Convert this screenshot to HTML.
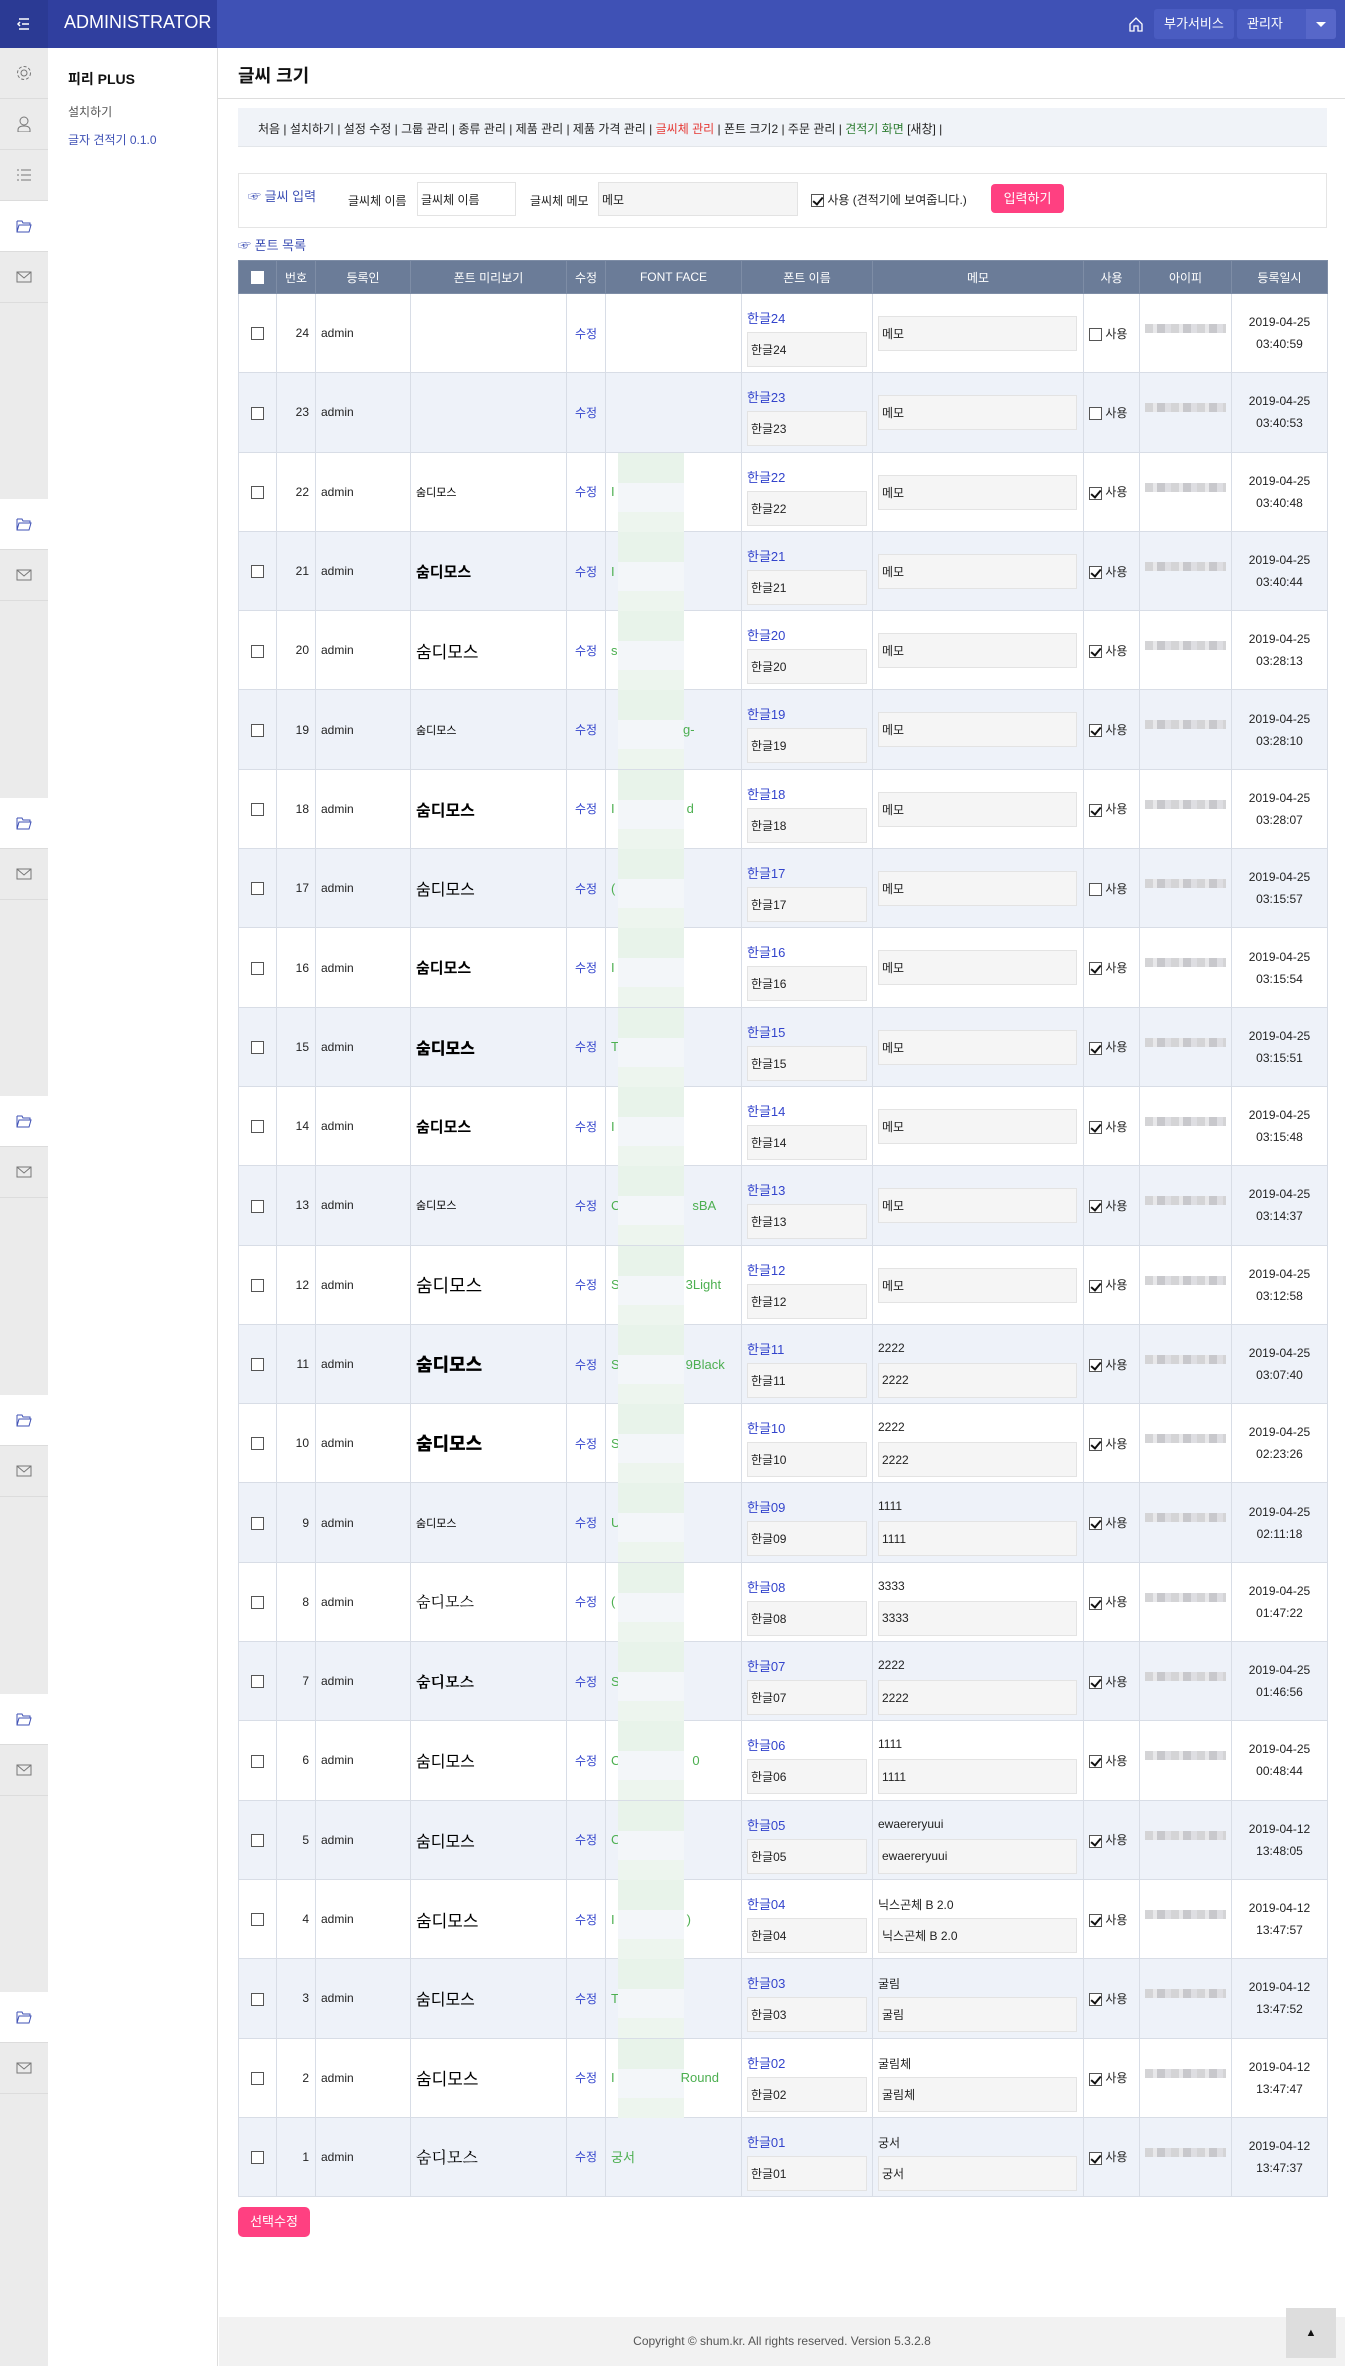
<!DOCTYPE html>
<html><head><meta charset="utf-8">
<style>
*{box-sizing:border-box;margin:0;padding:0}
body{width:1345px;height:2366px;position:relative;background:#fff;font-family:"Liberation Sans","Noto Sans CJK KR",sans-serif;font-size:12px;color:#222;overflow:hidden}
.abs{position:absolute}
#top{left:0;top:0;width:1345px;height:48px;background:#3f51b5}
#topl{left:0;top:0;width:217px;height:48px;background:#303f9f}
#tog{left:0;top:0;width:48px;height:48px;background:#2b3a94}
#iconbar{left:0;top:48px;width:48px;height:2318px;background:#ebebeb}
.ic{position:absolute;left:0;width:48px;height:51px;border-bottom:1px solid #dcdcdc;background:#ebebeb}
.ic.w{background:#fff}
.ic svg{position:absolute;left:16px;top:17px}
#side{left:48px;top:48px;width:170px;height:2318px;background:#fff;border-right:1px solid #ddd}
.topbtn{position:absolute;top:9px;height:30px;line-height:30px;color:#fff;font-size:13px;background:#4a5cc1;border-radius:3px;padding:0 10px}
table{border-collapse:collapse;table-layout:fixed;position:absolute;left:238px;top:260px;width:1089px}
th{background:#6b7c98;color:#fff;font-weight:normal;height:33px;border:1px solid #7e8da6;font-size:12px}
td{border:1px solid #d8dde6;height:79.3px;vertical-align:middle;position:relative}
tr:nth-child(odd) td{background:#eef2f9}
.cb{display:inline-block;width:13px;height:13px;border:1px solid #555;background:#fff;vertical-align:middle}
.ck{position:relative}
.ck:after{content:"";position:absolute;left:3px;top:0px;width:4px;height:8px;border:solid #111;border-width:0 2px 2px 0;transform:rotate(40deg)}
.num{text-align:right;padding-right:6px}
.adm{padding-left:5px}
.mod{text-align:center;color:#3344cc}
.fn a{position:absolute;left:5px;top:14px;color:#3344cc;font-size:13px}
.inp{position:absolute;background:#f5f5f5;border:1px solid #e3e3e3;padding-left:3px;font-size:12px;display:flex;align-items:center}
.fn .inp{left:5px;top:38px;width:120px;height:35px}
.mm .inp1{left:5px;top:22px;width:199px;height:35px}
.mm .inp2{left:5px;top:38px;width:199px;height:35px}
.mm .t{position:absolute;left:5px;top:16px}
.use{padding-left:5px;white-space:nowrap}
.ip div{position:absolute;left:5px;top:30px;width:81px;height:9px;background:repeating-linear-gradient(90deg,#d4d4d6 0 8px,#e8e8ea 8px 12px,#c8c8cc 12px 20px,#dedee2 20px 26px)}
.dt{text-align:center;line-height:22px}
.pv{padding-left:5px;color:#000}
.ff{padding-left:5px;color:#4caf50;font-size:13px}
.blk{position:absolute;left:12px;top:0;width:66px;height:79px;background:linear-gradient(180deg,#e8f3ea 0 38%,#f3f6f9 38% 75%,#edf5ee 75%)}
</style></head><body>
<div id="top" class="abs"></div>
<div id="topl" class="abs"></div>
<div id="tog" class="abs"><svg width="48" height="48"><g stroke="#fff" stroke-width="1.5" fill="none"><path d="M19 19h10M22 24h7M19 29h10M20 22l-2 2 2 2"/></g></svg></div>
<div class="abs" style="left:64px;top:12px;color:#fff;font-size:18px">ADMINISTRATOR</div>
<svg class="abs" style="left:1128px;top:15px" width="16" height="18"><path d="M2 9L8 3l6 6v7h-4v-5H6v5H2z" fill="none" stroke="#fff" stroke-width="1.3"/></svg>
<div class="topbtn" style="left:1154px;width:80px">부가서비스</div>
<div class="topbtn" style="left:1237px;width:99px;padding:0">
<span style="padding-left:10px">관리자</span><span style="position:absolute;right:0;top:0;width:30px;height:30px;background:#5767c9;border-radius:0 3px 3px 0"></span><span style="position:absolute;right:10px;top:13px;border:5px solid transparent;border-top:5px solid #fff;border-bottom:0"></span></div>

<div id="iconbar" class="abs">
<div class="ic" style="top:0"><svg width="16" height="16"><circle cx="8" cy="8" r="3" fill="none" stroke="#777"/><circle cx="8" cy="8" r="6.5" fill="none" stroke="#777" stroke-dasharray="3 2"/></svg></div>
<div class="ic" style="top:51px"><svg width="16" height="16"><circle cx="8" cy="5" r="4" fill="none" stroke="#777"/><path d="M2 16v-2c0-3 3-4 6-4s6 1 6 4v2z" fill="none" stroke="#777"/></svg></div>
<div class="ic" style="top:102px"><svg width="16" height="16" stroke="#777"><path d="M5 3h10M5 8h10M5 13h10M1 3h2M1 8h2M1 13h2"/></svg></div>
<div class="ic w" style="top:153px"><svg width="16" height="16" fill="none" stroke="#3f51b5"><path d="M1 3h5l1 2h7v2M1 3v11h12l2-7H3L1 14"/></svg></div>
<div class="ic" style="top:204px"><svg width="16" height="16" fill="none" stroke="#777"><path d="M1 3h14v10H1zM1 3l7 6 7-6"/></svg></div>
<div class="ic w" style="top:451px"><svg width="16" height="16" fill="none" stroke="#3f51b5"><path d="M1 3h5l1 2h7v2M1 3v11h12l2-7H3L1 14"/></svg></div>
<div class="ic" style="top:502px"><svg width="16" height="16" fill="none" stroke="#777"><path d="M1 3h14v10H1zM1 3l7 6 7-6"/></svg></div>
<div class="ic w" style="top:750px"><svg width="16" height="16" fill="none" stroke="#3f51b5"><path d="M1 3h5l1 2h7v2M1 3v11h12l2-7H3L1 14"/></svg></div>
<div class="ic" style="top:801px"><svg width="16" height="16" fill="none" stroke="#777"><path d="M1 3h14v10H1zM1 3l7 6 7-6"/></svg></div>
<div class="ic w" style="top:1048px"><svg width="16" height="16" fill="none" stroke="#3f51b5"><path d="M1 3h5l1 2h7v2M1 3v11h12l2-7H3L1 14"/></svg></div>
<div class="ic" style="top:1099px"><svg width="16" height="16" fill="none" stroke="#777"><path d="M1 3h14v10H1zM1 3l7 6 7-6"/></svg></div>
<div class="ic w" style="top:1347px"><svg width="16" height="16" fill="none" stroke="#3f51b5"><path d="M1 3h5l1 2h7v2M1 3v11h12l2-7H3L1 14"/></svg></div>
<div class="ic" style="top:1398px"><svg width="16" height="16" fill="none" stroke="#777"><path d="M1 3h14v10H1zM1 3l7 6 7-6"/></svg></div>
<div class="ic w" style="top:1646px"><svg width="16" height="16" fill="none" stroke="#3f51b5"><path d="M1 3h5l1 2h7v2M1 3v11h12l2-7H3L1 14"/></svg></div>
<div class="ic" style="top:1697px"><svg width="16" height="16" fill="none" stroke="#777"><path d="M1 3h14v10H1zM1 3l7 6 7-6"/></svg></div>
<div class="ic w" style="top:1944px"><svg width="16" height="16" fill="none" stroke="#3f51b5"><path d="M1 3h5l1 2h7v2M1 3v11h12l2-7H3L1 14"/></svg></div>
<div class="ic" style="top:1995px"><svg width="16" height="16" fill="none" stroke="#777"><path d="M1 3h14v10H1zM1 3l7 6 7-6"/></svg></div>
</div>

<div id="side" class="abs">
<div class="abs" style="left:20px;top:21px;font-size:14px;font-weight:bold;color:#111">피리 PLUS</div>
<div class="abs" style="left:20px;top:55px;color:#555">설치하기</div>
<div class="abs" style="left:20px;top:83px;color:#3f51b5">글자 견적기 0.1.0</div>
</div>

<div class="abs" style="left:238px;top:62px;font-size:18px;font-weight:bold;color:#111">글씨 크기</div>
<div class="abs" style="left:218px;top:98px;width:1127px;height:1px;background:#ddd"></div>
<div class="abs" style="left:238px;top:108px;width:1089px;height:39px;background:#f0f3f8;border-bottom:1px solid #e3e6ea;padding:12px 0 0 20px;font-size:12px;color:#222">처음 | 설치하기 | 설정 수정 | 그룹 관리 | 종류 관리 | 제품 관리 | 제품 가격 관리 | <span style="color:#e53935">글씨체 관리</span> | 폰트 크기2 | 주문 관리 | <span style="color:#2e7d32">견적기 화면</span> [새창] |</div>

<div class="abs" style="left:238px;top:173px;width:1089px;height:55px;border:1px solid #e5e5e5"></div>
<div class="abs" style="left:248px;top:186px;color:#3f51b5;font-size:13px">☞ 글씨 입력</div>
<div class="abs" style="left:348px;top:192px">글씨체 이름</div>
<div class="abs inp" style="left:417px;top:182px;width:99px;height:34px;background:#fff">글씨체 이름</div>
<div class="abs" style="left:530px;top:192px">글씨체 메모</div>
<div class="abs inp" style="left:598px;top:182px;width:200px;height:34px">메모</div>
<div class="abs" style="left:811px;top:191px"><span class="cb ck"></span> 사용 (견적기에 보여줍니다.)</div>
<div class="abs" style="left:991px;top:184px;width:73px;height:29px;background:#ff4081;border-radius:4px;color:#fff;font-size:13px;text-align:center;line-height:29px">입력하기</div>
<div class="abs" style="left:238px;top:235px;color:#3f51b5;font-size:13px">☞ 폰트 목록</div>

<table>
<colgroup><col style="width:38px"><col style="width:39px"><col style="width:95px"><col style="width:156px"><col style="width:39px"><col style="width:136px"><col style="width:131px"><col style="width:211px"><col style="width:56px"><col style="width:92px"><col style="width:96px"></colgroup>
<tr><th><span class="cb" style="border-color:#fff"></span></th><th>번호</th><th>등록인</th><th>폰트 미리보기</th><th>수정</th><th>FONT FACE</th><th>폰트 이름</th><th>메모</th><th>사용</th><th>아이피</th><th>등록일시</th></tr>

<tr><td align="center"><span class="cb"></span></td><td class="num">24</td><td class="adm">admin</td><td class="pv"></td><td class="mod">수정</td><td class="ff"></td><td class="fn"><a>한글24</a><div class="inp">한글24</div></td><td class="mm"><div class="inp inp1">메모</div></td><td class="use"><span class="cb"></span> 사용</td><td class="ip"><div></div></td><td class="dt">2019-04-25<br>03:40:59</td></tr>
<tr><td align="center"><span class="cb"></span></td><td class="num">23</td><td class="adm">admin</td><td class="pv"></td><td class="mod">수정</td><td class="ff"></td><td class="fn"><a>한글23</a><div class="inp">한글23</div></td><td class="mm"><div class="inp inp1">메모</div></td><td class="use"><span class="cb"></span> 사용</td><td class="ip"><div></div></td><td class="dt">2019-04-25<br>03:40:53</td></tr>
<tr><td align="center"><span class="cb"></span></td><td class="num">22</td><td class="adm">admin</td><td class="pv" style="font-size:11px">숨디모스</td><td class="mod">수정</td><td class="ff">I<div class="blk"></div></td><td class="fn"><a>한글22</a><div class="inp">한글22</div></td><td class="mm"><div class="inp inp1">메모</div></td><td class="use"><span class="cb ck"></span> 사용</td><td class="ip"><div></div></td><td class="dt">2019-04-25<br>03:40:48</td></tr>
<tr><td align="center"><span class="cb"></span></td><td class="num">21</td><td class="adm">admin</td><td class="pv" style="font-size:15px;font-weight:bold">숨디모스</td><td class="mod">수정</td><td class="ff">I<div class="blk"></div></td><td class="fn"><a>한글21</a><div class="inp">한글21</div></td><td class="mm"><div class="inp inp1">메모</div></td><td class="use"><span class="cb ck"></span> 사용</td><td class="ip"><div></div></td><td class="dt">2019-04-25<br>03:40:44</td></tr>
<tr><td align="center"><span class="cb"></span></td><td class="num">20</td><td class="adm">admin</td><td class="pv" style="font-size:17px">숨디모스</td><td class="mod">수정</td><td class="ff">s<div class="blk"></div></td><td class="fn"><a>한글20</a><div class="inp">한글20</div></td><td class="mm"><div class="inp inp1">메모</div></td><td class="use"><span class="cb ck"></span> 사용</td><td class="ip"><div></div></td><td class="dt">2019-04-25<br>03:28:13</td></tr>
<tr><td align="center"><span class="cb"></span></td><td class="num">19</td><td class="adm">admin</td><td class="pv" style="font-size:11px">숨디모스</td><td class="mod">수정</td><td class="ff"><div class="blk"></div><span style="position:relative;left:72px">g-</span></td><td class="fn"><a>한글19</a><div class="inp">한글19</div></td><td class="mm"><div class="inp inp1">메모</div></td><td class="use"><span class="cb ck"></span> 사용</td><td class="ip"><div></div></td><td class="dt">2019-04-25<br>03:28:10</td></tr>
<tr><td align="center"><span class="cb"></span></td><td class="num">18</td><td class="adm">admin</td><td class="pv" style="font-size:16px;font-weight:bold">숨디모스</td><td class="mod">수정</td><td class="ff">I<div class="blk"></div><span style="position:relative;left:72px">d</span></td><td class="fn"><a>한글18</a><div class="inp">한글18</div></td><td class="mm"><div class="inp inp1">메모</div></td><td class="use"><span class="cb ck"></span> 사용</td><td class="ip"><div></div></td><td class="dt">2019-04-25<br>03:28:07</td></tr>
<tr><td align="center"><span class="cb"></span></td><td class="num">17</td><td class="adm">admin</td><td class="pv" style="font-size:16px">숨디모스</td><td class="mod">수정</td><td class="ff">(<div class="blk"></div></td><td class="fn"><a>한글17</a><div class="inp">한글17</div></td><td class="mm"><div class="inp inp1">메모</div></td><td class="use"><span class="cb"></span> 사용</td><td class="ip"><div></div></td><td class="dt">2019-04-25<br>03:15:57</td></tr>
<tr><td align="center"><span class="cb"></span></td><td class="num">16</td><td class="adm">admin</td><td class="pv" style="font-size:15px;font-weight:bold">숨디모스</td><td class="mod">수정</td><td class="ff">I<div class="blk"></div></td><td class="fn"><a>한글16</a><div class="inp">한글16</div></td><td class="mm"><div class="inp inp1">메모</div></td><td class="use"><span class="cb ck"></span> 사용</td><td class="ip"><div></div></td><td class="dt">2019-04-25<br>03:15:54</td></tr>
<tr><td align="center"><span class="cb"></span></td><td class="num">15</td><td class="adm">admin</td><td class="pv" style="font-size:16px;font-weight:900">숨디모스</td><td class="mod">수정</td><td class="ff">T<div class="blk"></div></td><td class="fn"><a>한글15</a><div class="inp">한글15</div></td><td class="mm"><div class="inp inp1">메모</div></td><td class="use"><span class="cb ck"></span> 사용</td><td class="ip"><div></div></td><td class="dt">2019-04-25<br>03:15:51</td></tr>
<tr><td align="center"><span class="cb"></span></td><td class="num">14</td><td class="adm">admin</td><td class="pv" style="font-size:15px;font-weight:bold">숨디모스</td><td class="mod">수정</td><td class="ff">I<div class="blk"></div></td><td class="fn"><a>한글14</a><div class="inp">한글14</div></td><td class="mm"><div class="inp inp1">메모</div></td><td class="use"><span class="cb ck"></span> 사용</td><td class="ip"><div></div></td><td class="dt">2019-04-25<br>03:15:48</td></tr>
<tr><td align="center"><span class="cb"></span></td><td class="num">13</td><td class="adm">admin</td><td class="pv" style="font-size:11px">숨디모스</td><td class="mod">수정</td><td class="ff">C<div class="blk"></div><span style="position:relative;left:72px">sBA</span></td><td class="fn"><a>한글13</a><div class="inp">한글13</div></td><td class="mm"><div class="inp inp1">메모</div></td><td class="use"><span class="cb ck"></span> 사용</td><td class="ip"><div></div></td><td class="dt">2019-04-25<br>03:14:37</td></tr>
<tr><td align="center"><span class="cb"></span></td><td class="num">12</td><td class="adm">admin</td><td class="pv" style="font-size:18px">숨디모스</td><td class="mod">수정</td><td class="ff">S<div class="blk"></div><span style="position:relative;left:66px">3Light</span></td><td class="fn"><a>한글12</a><div class="inp">한글12</div></td><td class="mm"><div class="inp inp1">메모</div></td><td class="use"><span class="cb ck"></span> 사용</td><td class="ip"><div></div></td><td class="dt">2019-04-25<br>03:12:58</td></tr>
<tr><td align="center"><span class="cb"></span></td><td class="num">11</td><td class="adm">admin</td><td class="pv" style="font-size:18px;font-weight:900">숨디모스</td><td class="mod">수정</td><td class="ff">S<div class="blk"></div><span style="position:relative;left:66px">9Black</span></td><td class="fn"><a>한글11</a><div class="inp">한글11</div></td><td class="mm"><span class="t">2222</span><div class="inp inp2">2222</div></td><td class="use"><span class="cb ck"></span> 사용</td><td class="ip"><div></div></td><td class="dt">2019-04-25<br>03:07:40</td></tr>
<tr><td align="center"><span class="cb"></span></td><td class="num">10</td><td class="adm">admin</td><td class="pv" style="font-size:18px;font-weight:900">숨디모스</td><td class="mod">수정</td><td class="ff">S<div class="blk"></div></td><td class="fn"><a>한글10</a><div class="inp">한글10</div></td><td class="mm"><span class="t">2222</span><div class="inp inp2">2222</div></td><td class="use"><span class="cb ck"></span> 사용</td><td class="ip"><div></div></td><td class="dt">2019-04-25<br>02:23:26</td></tr>
<tr><td align="center"><span class="cb"></span></td><td class="num">9</td><td class="adm">admin</td><td class="pv" style="font-size:11px">숨디모스</td><td class="mod">수정</td><td class="ff">U<div class="blk"></div></td><td class="fn"><a>한글09</a><div class="inp">한글09</div></td><td class="mm"><span class="t">1111</span><div class="inp inp2">1111</div></td><td class="use"><span class="cb ck"></span> 사용</td><td class="ip"><div></div></td><td class="dt">2019-04-25<br>02:11:18</td></tr>
<tr><td align="center"><span class="cb"></span></td><td class="num">8</td><td class="adm">admin</td><td class="pv" style="font-size:15px;font-family:'Liberation Serif','Noto Serif CJK SC',serif">숨디모스</td><td class="mod">수정</td><td class="ff">(<div class="blk"></div></td><td class="fn"><a>한글08</a><div class="inp">한글08</div></td><td class="mm"><span class="t">3333</span><div class="inp inp2">3333</div></td><td class="use"><span class="cb ck"></span> 사용</td><td class="ip"><div></div></td><td class="dt">2019-04-25<br>01:47:22</td></tr>
<tr><td align="center"><span class="cb"></span></td><td class="num">7</td><td class="adm">admin</td><td class="pv" style="font-size:15px;font-weight:bold;font-family:'Liberation Serif','Noto Serif CJK SC',serif">숨디모스</td><td class="mod">수정</td><td class="ff">S<div class="blk"></div></td><td class="fn"><a>한글07</a><div class="inp">한글07</div></td><td class="mm"><span class="t">2222</span><div class="inp inp2">2222</div></td><td class="use"><span class="cb ck"></span> 사용</td><td class="ip"><div></div></td><td class="dt">2019-04-25<br>01:46:56</td></tr>
<tr><td align="center"><span class="cb"></span></td><td class="num">6</td><td class="adm">admin</td><td class="pv" style="font-size:16px">숨디모스</td><td class="mod">수정</td><td class="ff">C<div class="blk"></div><span style="position:relative;left:72px">0</span></td><td class="fn"><a>한글06</a><div class="inp">한글06</div></td><td class="mm"><span class="t">1111</span><div class="inp inp2">1111</div></td><td class="use"><span class="cb ck"></span> 사용</td><td class="ip"><div></div></td><td class="dt">2019-04-25<br>00:48:44</td></tr>
<tr><td align="center"><span class="cb"></span></td><td class="num">5</td><td class="adm">admin</td><td class="pv" style="font-size:16px">숨디모스</td><td class="mod">수정</td><td class="ff">C<div class="blk"></div></td><td class="fn"><a>한글05</a><div class="inp">한글05</div></td><td class="mm"><span class="t">ewaereryuui</span><div class="inp inp2">ewaereryuui</div></td><td class="use"><span class="cb ck"></span> 사용</td><td class="ip"><div></div></td><td class="dt">2019-04-12<br>13:48:05</td></tr>
<tr><td align="center"><span class="cb"></span></td><td class="num">4</td><td class="adm">admin</td><td class="pv" style="font-size:17px">숨디모스</td><td class="mod">수정</td><td class="ff">I<div class="blk"></div><span style="position:relative;left:72px">)</span></td><td class="fn"><a>한글04</a><div class="inp">한글04</div></td><td class="mm"><span class="t">닉스곤체 B 2.0</span><div class="inp inp2">닉스곤체 B 2.0</div></td><td class="use"><span class="cb ck"></span> 사용</td><td class="ip"><div></div></td><td class="dt">2019-04-12<br>13:47:57</td></tr>
<tr><td align="center"><span class="cb"></span></td><td class="num">3</td><td class="adm">admin</td><td class="pv" style="font-size:16px">숨디모스</td><td class="mod">수정</td><td class="ff">T<div class="blk"></div></td><td class="fn"><a>한글03</a><div class="inp">한글03</div></td><td class="mm"><span class="t">굴림</span><div class="inp inp2">굴림</div></td><td class="use"><span class="cb ck"></span> 사용</td><td class="ip"><div></div></td><td class="dt">2019-04-12<br>13:47:52</td></tr>
<tr><td align="center"><span class="cb"></span></td><td class="num">2</td><td class="adm">admin</td><td class="pv" style="font-size:17px">숨디모스</td><td class="mod">수정</td><td class="ff">I<div class="blk"></div><span style="position:relative;left:66px">Round</span></td><td class="fn"><a>한글02</a><div class="inp">한글02</div></td><td class="mm"><span class="t">굴림체</span><div class="inp inp2">굴림체</div></td><td class="use"><span class="cb ck"></span> 사용</td><td class="ip"><div></div></td><td class="dt">2019-04-12<br>13:47:47</td></tr>
<tr><td align="center"><span class="cb"></span></td><td class="num">1</td><td class="adm">admin</td><td class="pv" style="font-size:16px;font-family:'Noto Serif CJK SC',serif">숨디모스</td><td class="mod">수정</td><td class="ff">궁서</td><td class="fn"><a>한글01</a><div class="inp">한글01</div></td><td class="mm"><span class="t">궁서</span><div class="inp inp2">궁서</div></td><td class="use"><span class="cb ck"></span> 사용</td><td class="ip"><div></div></td><td class="dt">2019-04-12<br>13:47:37</td></tr>
</table>

<div class="abs" style="left:238px;top:2207px;width:72px;height:30px;background:#ff4081;border-radius:5px;color:#fff;font-size:13px;text-align:center;line-height:30px">선택수정</div>
<div class="abs" style="left:219px;top:2317px;width:1126px;height:49px;background:#f2f2f2;text-align:center;line-height:49px;color:#555;font-size:12px">Copyright © shum.kr. All rights reserved. Version 5.3.2.8</div>
<div class="abs" style="left:1286px;top:2308px;width:50px;height:50px;background:#ddd;text-align:center;line-height:50px;font-size:11px;color:#111">▲</div>
</body></html>
